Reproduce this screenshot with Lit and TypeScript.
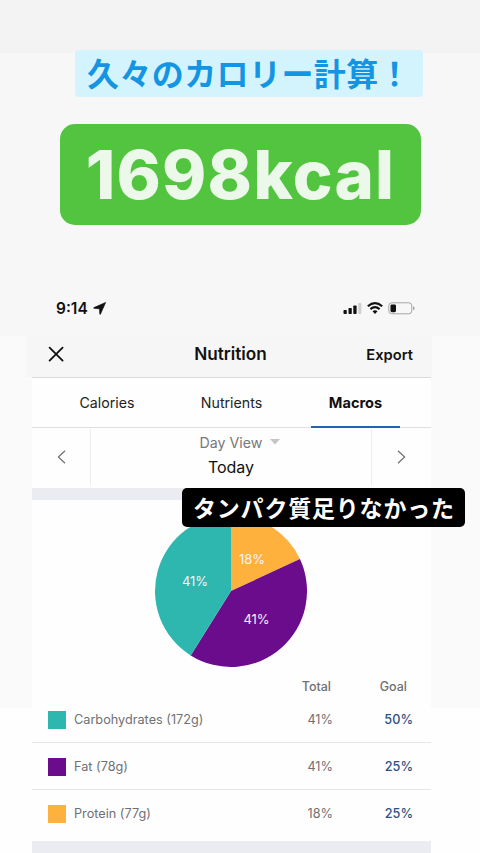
import { LitElement, html, css, svg } from "lit";
import { customElement } from "lit/decorators.js";
import { styleMap } from "lit/directives/style-map.js";

interface Macro {
  name: string;
  total: string;
  goal: string;
  color: string;
}

const MACROS: Macro[] = [
  { name: "Carbohydrates (172g)", total: "41%", goal: "50%", color: "#2eb7ae" },
  { name: "Fat (78g)", total: "41%", goal: "25%", color: "#6a0c8c" },
  { name: "Protein (77g)", total: "18%", goal: "25%", color: "#ffb13d" },
];

@customElement("macro-pie")
export class MacroPie extends LitElement {
  static styles = css`
    :host { display: block; width: 152px; height: 152px; }
    .pie { display: block; }
    .label { font: 400 13px Inter, sans-serif; fill: #f8f2f7; text-anchor: middle; }
  `;

  private slice(from: number, to: number, color: string) {
    const pt = (f: number) => {
      const a = f * 2 * Math.PI;
      return `${(76 + 76 * Math.sin(a)).toFixed(2)} ${(76 - 76 * Math.cos(a)).toFixed(2)}`;
    };
    return svg`<path d="M76 76L${pt(from)}A76 76 0 0 1 ${pt(to)}Z" fill=${color}></path>`;
  }

  render() {
    return html`<svg class="pie" width="152" height="152" viewBox="0 0 152 152">
      ${this.slice(0, 0.181, "#ffb13d")}
      ${this.slice(0.181, 0.589, "#6a0c8c")}
      ${this.slice(0.589, 1, "#2eb7ae")}
      <text class="label" x="97" y="49">18%</text>
      <text class="label" x="101.5" y="109">41%</text>
      <text class="label" x="40" y="70.5">41%</text>
    </svg>`;
  }
}

@customElement("app-root")
export class AppRoot extends LitElement {
  static styles = css`
    :host {
      display: block;
      position: relative;
      box-sizing: border-box;
      width: 480px;
      height: 853px;
      overflow: hidden;
      font-family: Inter, "Noto Sans CJK JP", sans-serif;
      color: #111;
      white-space: nowrap;
      background: linear-gradient(#f3f3f3 53px, #f7f7f7 53px 336px, #fafafa 336px 708px, #fefefe 708px);
    }
    .story { display: flex; flex-direction: column; height: 280px; }
    .headline {
      box-sizing: border-box;
      width: 348px;
      height: 47px;
      margin: 50px 0 0 75px;
      padding-left: 12px;
      border-radius: 4px;
      background: #d4f4fd;
      color: #1495e4;
      font: 700 32px/44px "Noto Sans CJK JP", sans-serif;
      letter-spacing: 0.4px;
    }
    .kcal {
      width: 361px;
      height: 101px;
      margin: 27px 0 0 60px;
      border-radius: 15px;
      background: #52c43f;
      color: #ebf8ea;
      font-size: 67px;
      font-weight: 800;
      line-height: 102px;
      letter-spacing: 1.2px;
      text-align: center;
    }
    .status { display: flex; align-items: center; height: 56px; padding: 0 65px 0 56px; }
    .time { font-size: 15.5px; font-weight: 600; margin-right: 5px; }
    .arrow { margin-right: auto; }
    .header {
      display: grid;
      grid-template-columns: 60px 1fr 60px;
      align-items: center;
      box-sizing: border-box;
      height: 41px;
      margin: 0 48px 0 27px;
      padding: 0 19px 5px 21px;
      background: #f6f6f6;
    }
    .title { font-size: 17.2px; font-weight: 600; line-height: 20px; padding-bottom: 1px; text-align: center; }
    .export { font-size: 14.7px; font-weight: 600; line-height: 18px; padding-top: 2px; text-align: right; }
    .screen { width: 399px; margin-left: 32px; background: #fefefe; }
    .tabs {
      display: grid;
      grid-template-columns: 37px 76px 1fr 89px 31px;
      box-sizing: border-box;
      height: 51px;
      border-top: 1px solid #dadadd;
      border-bottom: 1px solid #dfdfe1;
      font-size: 14.2px;
      line-height: 49px;
      text-align: center;
    }
    .tab { grid-row: 1; color: #222; }
    .calories { grid-column: 2; }
    .nutrients { grid-column: 3; padding-left: 7px; }
    .macros { grid-column: 4; font-size: 14.6px; line-height: 50px; font-weight: 700; color: #111; height: 48px; border-bottom: 2px solid #2461ae; }
    .day { display: grid; grid-template-columns: 58px 1fr 59px; height: 60px; padding-top: 1px; box-sizing: border-box; }
    .step { display: flex; align-items: center; justify-content: center; height: 56px; }
    .center {
      display: flex;
      flex-direction: column;
      align-items: center;
      border: solid #ececee;
      border-width: 0 1px;
      height: 56px;
    }
    .view { display: flex; align-items: center; gap: 8px; height: 20px; margin: 3px 0 0 18px; font-size: 14.2px; color: #77777a; }
    .today { margin-top: 3px; font-size: 16px; line-height: 24px; }
    .band { height: 12px; background: #ebebf2; }
    .chart { display: flex; justify-content: center; height: 177px; padding: 15px 1px 0 0; box-sizing: border-box; }
    .columns, .row { display: grid; grid-template-columns: 1fr 76px 80px; padding: 0 18px 0 16px; color: #707073; }
    .columns { height: 19px; padding-right: 24px; grid-template-columns: 1fr 76px 76px; font-size: 12.5px; line-height: 19px; text-align: right; font-weight: 500; }
    .total { grid-column: 2; }
    .row { align-items: center; box-sizing: border-box; height: 47px; border-bottom: 1px solid #e6e6e9; font-size: 12.7px; }
    .row:last-child { border-color: transparent; height: 51px; padding-bottom: 4px; }
    .name { display: flex; align-items: center; gap: 8px; }
    .swatch { width: 18px; height: 18px; margin: 2px 0 0; }
    .num { text-align: right; }
    .goal { color: #2f5083; font-weight: 500; }
    .footer { height: 13px; background: #ebebf2; }
    .caption {
      position: absolute;
      left: 182px;
      top: 488px;
      box-sizing: border-box;
      width: 283px;
      height: 39px;
      padding-left: 11px;
      border-radius: 5px;
      background: #000;
      color: #fff;
      font: 700 23px/38px "Noto Sans CJK JP", sans-serif;
      letter-spacing: 0.8px;
    }
  `;

  render() {
    return html`
      <div class="story">
        <div class="headline">久々のカロリー計算！</div>
        <div class="kcal">1698kcal</div>
      </div>
      <div class="status">
        <span class="time">9:14</span>
        <svg class="arrow" width="13" height="13" viewBox="0 0 13 13"><path d="M12.6.5L7.4 12.2Q7 12.8 6.8 12L6.5 6.8L1 6.3Q.2 6 1 5.6Z" fill="#111" stroke="#111" stroke-width=".7" stroke-linejoin="round"/></svg>
        <svg width="72" height="14" viewBox="0 0 72 14">
          <g fill="#111">
            <rect x="0.5" y="9" width="3.3" height="4" rx=".8"/>
            <rect x="5.5" y="7" width="3.3" height="6" rx=".8"/>
            <rect x="10.3" y="4.5" width="3.3" height="8.5" rx=".8"/>
            <rect x="15.2" y="2" width="3.2" height="11" rx=".8" fill="#d0d0d2"/>
          </g>
          <g fill="none" stroke="#111" stroke-width="2.1">
            <path d="M24.8 5.2Q32 -1 39.2 5.2"/>
            <path d="M27.4 8.1Q32 4.2 36.6 8.1"/>
          </g>
          <path d="M29.5 10.2Q32 8.4 34.5 10.2L32 13Z" fill="#111"/>
          <rect x="45.8" y="1.8" width="23" height="11" rx="3" fill="none" stroke="#a6a6a8"/>
          <rect x="47.5" y="3.4" width="5.5" height="7.8" rx="1.4" fill="#111"/>
          <path d="M70 5.2Q71.6 5.8 71.6 7.2Q71.6 8.6 70 9.2Z" fill="#a6a6a8"/>
        </svg>
      </div>
      <div class="header">
        <svg width="16" height="16" viewBox="0 0 16 16"><path d="M1.6 1.6L14.6 14.6M14.6 1.6L1.6 14.6" stroke="#111" stroke-width="1.8" stroke-linecap="round"/></svg>
        <span class="title">Nutrition</span>
        <span class="export">Export</span>
      </div>
      <div class="screen">
        <div class="tabs">
          <span class="tab calories">Calories</span>
          <span class="tab nutrients">Nutrients</span>
          <span class="tab macros">Macros</span>
        </div>
        <div class="day">
          <span class="step"><svg width="9" height="14" viewBox="0 0 9 14"><path d="M8 .8L1.4 7L8 13.2" fill="none" stroke="#707073" stroke-width="1.2"/></svg></span>
          <div class="center">
            <div class="view"><span>Day View</span><svg width="10" height="6" viewBox="0 0 10 6"><path d="M0 0H10L5 5.5Z" fill="#c4c4c6"/></svg></div>
            <div class="today">Today</div>
          </div>
          <span class="step"><svg width="9" height="14" viewBox="0 0 9 14"><path d="M1 .8L7.6 7L1 13.2" fill="none" stroke="#707073" stroke-width="1.2"/></svg></span>
        </div>
        <div class="band"></div>
        <div class="chart"><macro-pie></macro-pie></div>
        <div class="columns"><span class="total">Total</span><span>Goal</span></div>
        <div class="rows">
          ${MACROS.map(
            (m) => html`<div class="row">
              <span class="name"><span class="swatch" style=${styleMap({ background: m.color })}></span>${m.name}</span>
              <span class="num">${m.total}</span>
              <span class="num goal">${m.goal}</span>
            </div>`
          )}
        </div>
        <div class="footer"></div>
      </div>
      <div class="caption">タンパク質足りなかった</div>
    `;
  }
}
